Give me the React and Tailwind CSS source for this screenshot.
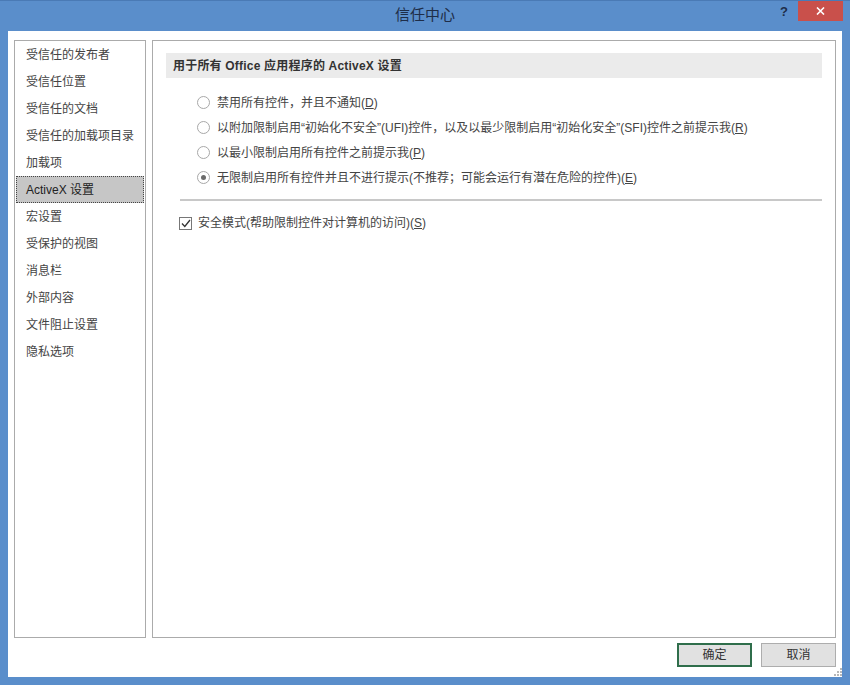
import React from 'react';

const FONT = { fontFamily: '"Liberation Sans", "Noto Sans CJK SC", sans-serif' };

const NAV_ITEMS = [
  '受信任的发布者',
  '受信任位置',
  '受信任的文档',
  '受信任的加载项目录',
  '加载项',
  'ActiveX 设置',
  '宏设置',
  '受保护的视图',
  '消息栏',
  '外部内容',
  '文件阻止设置',
  '隐私选项',
];

const OPTIONS = [
  { text: '禁用所有控件，并且不通知', key: 'D' },
  { text: '以附加限制启用“初始化不安全”(UFI)控件，以及以最少限制启用“初始化安全”(SFI)控件之前提示我', key: 'R' },
  { text: '以最小限制启用所有控件之前提示我', key: 'P' },
  { text: '无限制启用所有控件并且不进行提示(不推荐；可能会运行有潜在危险的控件)', key: 'E', checked: true },
];

const Radio = ({ checked }) => (
  <span className="w-[13px] h-[13px] rounded-full border border-[#a8a8a8] bg-white flex items-center justify-center shrink-0">
    {checked && <span className="w-[5px] h-[5px] rounded-full bg-[#6b6b6b]" />}
  </span>
);

const App = () => (
  <div className="w-[850px] h-[685px] bg-[#5a8ecb] flex flex-col text-[12px] text-[#444]" style={FONT}>
    {/* title bar */}
    <div className="h-[31px] relative flex items-center justify-center border-t border-[#4a7ab5]">
      <span className="text-[15px] text-[#1e2d48] -mt-[1px]">信任中心</span>
      <span className="absolute right-[62px] top-[1px] text-[13px] font-bold text-[#1e2d48]">?</span>
      <div className="absolute right-[7px] top-0 w-[45px] h-[20px] bg-[#c9504b] flex items-center justify-center">
        <svg width="9" height="8" viewBox="0 0 9 8">
          <path d="M1 0.5 L8 7.5 M8 0.5 L1 7.5" stroke="#fff" strokeWidth="1.6" />
        </svg>
      </div>
    </div>

    {/* body */}
    <div className="mx-[8px] mb-[8px] flex-1 bg-white flex flex-col px-[6px] pt-[9px] relative">
      <div className="flex gap-[6px] h-[598px]">
        <div className="w-[132px] border border-[#ababab] flex flex-col">
          {NAV_ITEMS.map((item) => (
            <div
              key={item}
              className={`h-[27px] mx-[1px] flex items-center pl-[9px] ${item === 'ActiveX 设置' ? 'bg-[#c6c6c6] border border-dotted border-[#444] text-[#222]' : 'border border-transparent'}`}
            >
              {item}
            </div>
          ))}
        </div>

        <div className="flex-1 border border-[#ababab] pl-[13px] pr-[13px] pt-[12px]">
          <div className="h-[25px] bg-[#ebebeb] flex items-center px-[7px] font-bold text-[#333] tracking-[0.2px]">
            用于所有 Office 应用程序的 ActiveX 设置
          </div>
          <div className="flex flex-col mt-[12px] pl-[31px]">
            {OPTIONS.map((o) => (
              <div key={o.key} className="h-[25px] flex items-center gap-[7px]">
                <Radio checked={o.checked} />
                <span>
                  {o.text}(<span className="underline">{o.key}</span>)
                </span>
              </div>
            ))}
          </div>
          <div className="mt-[9px] ml-[14px] h-[2px] bg-[#c8c8c8]" />
          <div className="mt-[10px] ml-[13px] flex items-center gap-[6px] h-[24px]">
            <span className="w-[13px] h-[13px] border border-[#777] flex items-center justify-center">
              <svg width="10" height="9" viewBox="0 0 10 9">
                <path d="M1 4.5 L3.8 7.5 L9 1" fill="none" stroke="#333" strokeWidth="1.3" />
              </svg>
            </span>
            <span>
              安全模式(帮助限制控件对计算机的访问)(<span className="underline">S</span>)
            </span>
          </div>
        </div>
      </div>

      <div className="flex justify-end gap-[9px] mt-[5px]">
        <button className="w-[75px] h-[24px] bg-[#e1e1e1] border-2 border-[#2f6e4b] text-[12px] text-[#333]">确定</button>
        <button className="w-[75px] h-[24px] bg-[#e1e1e1] border border-[#adadad] text-[12px] text-[#333]">取消</button>
      </div>

      <svg className="absolute right-[0px] bottom-[1px]" width="8" height="8" viewBox="0 0 8 8">
        <rect x="6" y="0" width="2" height="2" fill="#b8b8b8" />
        <rect x="3" y="3" width="2" height="2" fill="#b8b8b8" />
        <rect x="6" y="3" width="2" height="2" fill="#b8b8b8" />
        <rect x="0" y="6" width="2" height="2" fill="#b8b8b8" />
        <rect x="3" y="6" width="2" height="2" fill="#b8b8b8" />
        <rect x="6" y="6" width="2" height="2" fill="#b8b8b8" />
      </svg>
    </div>
  </div>
);

export default App;
